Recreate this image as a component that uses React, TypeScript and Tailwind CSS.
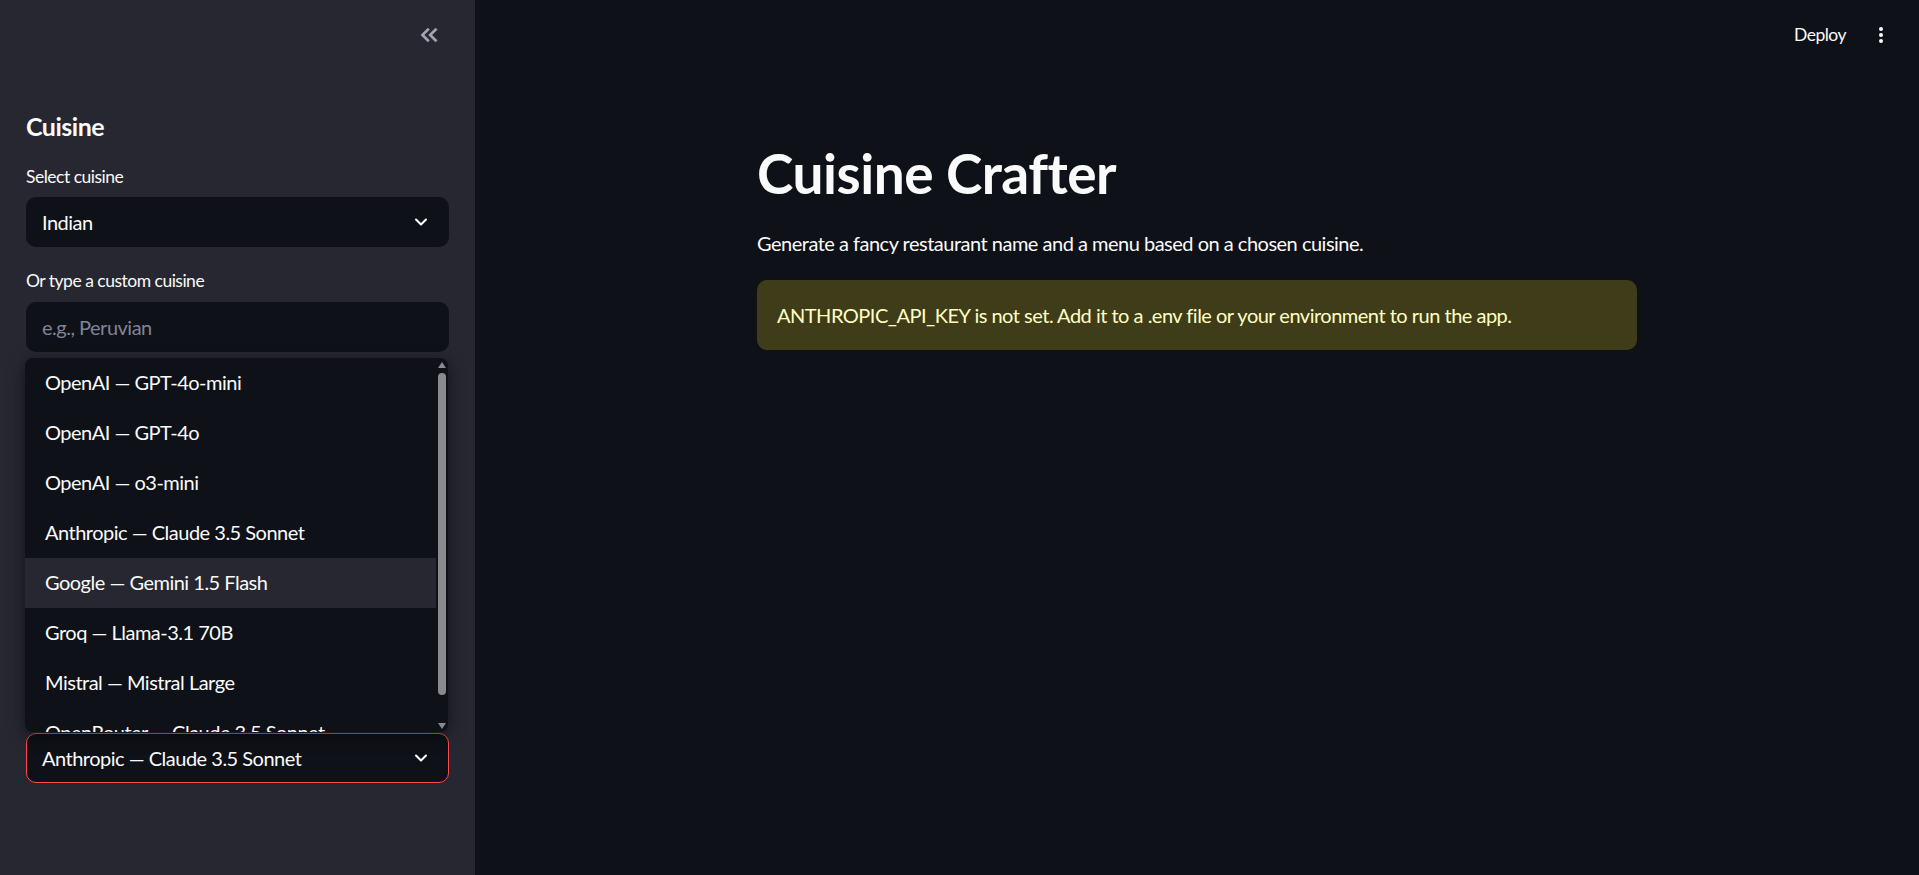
import { ChevronDown } from "lucide-react";

const models = [
  "OpenAI — GPT-4o-mini",
  "OpenAI — GPT-4o",
  "OpenAI — o3-mini",
  "Anthropic — Claude 3.5 Sonnet",
  "Google — Gemini 1.5 Flash",
  "Groq — Llama-3.1 70B",
  "Mistral — Mistral Large",
  "OpenRouter — Claude 3.5 Sonnet",
];

function CollapseIcon() {
  return (
    <svg width="28" height="28" viewBox="0 0 24 24" fill="#a3a8b4" stroke="#a3a8b4" strokeWidth="0.4">
      <path d="M17.59 18L19 16.59 14.42 12 19 7.41 17.59 6l-6 6z" />
      <path d="M11 18l1.41-1.41L7.83 12l4.58-4.59L11 6l-6 6z" />
    </svg>
  );
}

function ModelMenu() {
  return (
    <div className="absolute bottom-full left-[-1px] mb-[1px] flex h-[374px] w-[423px] overflow-hidden rounded-lg bg-[#0e1117] shadow-[0_4px_16px_rgba(0,0,0,0.5)]">
      <div className="flex-1">
        {models.map((m, i) => (
          <div
            key={m}
            className={
              "flex h-[50px] items-center pb-[2px] pl-[20px] text-[20px] leading-[24px] text-[#fafafa] " +
              (i === 4 ? "bg-[#262730]" : "")
            }
          >
            {m}
          </div>
        ))}
      </div>
      <div className="relative w-[12px]">
        <div className="absolute left-[2px] top-[4px] h-0 w-0 border-x-[4px] border-b-[6px] border-x-transparent border-b-[#8a8a8e]" />
        <div className="absolute left-[2px] top-[15px] h-[322px] w-[8px] rounded-full bg-[#8a8a8e]" />
        <div className="absolute bottom-[3px] left-[2px] h-0 w-0 border-x-[4px] border-t-[6px] border-x-transparent border-t-[#8a8a8e]" />
      </div>
    </div>
  );
}

function Sidebar() {
  return (
    <aside className="flex h-[875px] w-[475px] shrink-0 flex-col bg-[#262730] px-[26px]">
      <div className="flex justify-end pr-[6px] pt-[21px]">
        <CollapseIcon />
      </div>
      <h2 className="mt-[62px] text-[25px] font-bold leading-[30px] text-[#fafafa]">
        Cuisine
      </h2>
      <label className="mt-[24px] text-[17.5px] leading-[24px] text-[#fafafa]">
        Select cuisine
      </label>
      <div className="mt-[8px] flex h-[50px] items-center justify-between rounded-[10px] bg-[#0e1117] pb-[1px] pl-[16px] pr-[18px] text-[20px] leading-[24px] text-[#fafafa]">
        <span>Indian</span>
        <ChevronDown size={20} strokeWidth={2.5} />
      </div>
      <label className="mt-[22px] text-[17.5px] leading-[24px] text-[#fafafa]">
        Or type a custom cuisine
      </label>
      <div className="mt-[9px] flex h-[50px] items-center rounded-[10px] bg-[#0e1117] pb-[1px] pl-[16px] text-[20px] leading-[24px] text-[#808495]">
        e.g., Peruvian
      </div>
      <div className="relative mt-[381px]">
        <ModelMenu />
        <div className="flex h-[50px] items-center justify-between rounded-[10px] border border-[#ff4b4b] bg-[#0e1117] pb-[1px] pl-[15px] pr-[17px] text-[20px] leading-[24px] text-[#fafafa]">
          <span>Anthropic — Claude 3.5 Sonnet</span>
          <ChevronDown size={20} strokeWidth={2.5} />
        </div>
      </div>
    </aside>
  );
}

export default function App() {
  return (
    <div className="flex h-[875px] w-full overflow-hidden bg-[#0e1117] font-[Lato,sans-serif] tracking-[-0.5px] text-[#fafafa]">
      <Sidebar />
      <main className="flex flex-1 flex-col">
        <header className="flex h-[70px] items-center justify-end gap-[33px] pr-[36px]">
          <span className="text-[17.5px] leading-[24px]">Deploy</span>
          <div className="flex flex-col items-center gap-[2px]">
            <span className="h-[4px] w-[4px] rounded-full bg-[#fafafa]" />
            <span className="h-[4px] w-[4px] rounded-full bg-[#fafafa]" />
            <span className="h-[4px] w-[4px] rounded-full bg-[#fafafa]" />
          </div>
        </header>
        <div className="mx-auto w-[880px]">
          <h1 className="mt-[70px] text-[55px] font-bold leading-[66px]">
            Cuisine Crafter
          </h1>
          <p className="mt-[25px] text-[20px] leading-[24px]">
            Generate a fancy restaurant name and a menu based on a chosen cuisine.
          </p>
          <div className="mt-[25px] flex h-[70px] items-center rounded-[10px] bg-[#3f3c1a] px-[20px] pb-[1px] text-[20px] leading-[24px] text-[#ffffc2]">
            ANTHROPIC_API_KEY is not set. Add it to a .env file or your environment to run the app.
          </div>
        </div>
      </main>
    </div>
  );
}
